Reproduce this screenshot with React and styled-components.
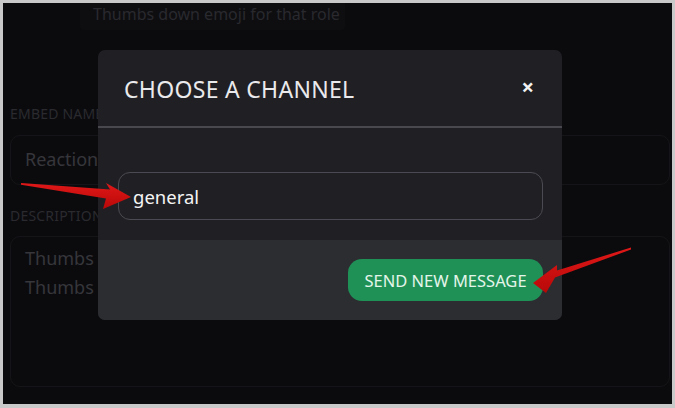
import React from "react";
import styled, { createGlobalStyle } from "styled-components";

const Global = createGlobalStyle`
  html, body { margin: 0; padding: 0; background: #c9c9c9; }
  body { font-family: "Noto Sans", "Open Sans", sans-serif; }
  * { box-sizing: border-box; }
`;

const Frame = styled.div`
  position: relative;
  margin: 3px 3px 4px 3px;
  height: 401px;
  background: #0b0b0e;
  overflow: hidden;
  display: flex;
  flex-direction: column;
  padding: 0 2px 0 7px;
`;

const Tip = styled.div`
  align-self: flex-start;
  margin-left: 70px;
  margin-top: -3px;
  width: 265px;
  height: 30px;
  background: #0e0e11;
  border-radius: 4px;
  color: #29292e;
  font-size: 16px;
  padding: 3px 0 0 13px;
  white-space: nowrap;
`;

const Label = styled.div`
  color: #2a2a2f;
  font-size: 14px;
  letter-spacing: 0.2px;
  text-transform: uppercase;
  margin-top: ${(p) => p.$mt}px;
  line-height: 18px;
`;

const Field = styled.div`
  margin-top: ${(p) => p.$mt}px;
  height: ${(p) => p.$h}px;
  border: 1px solid #151519;
  border-radius: 10px;
  color: #36363b;
  font-size: 18px;
  line-height: 29px;
  padding: ${(p) => p.$pad};
`;

const Modal = styled.div`
  position: absolute;
  left: 95px;
  top: 47px;
  width: 464px;
  height: 270px;
  border-radius: 7px;
  overflow: hidden;
  background: #202024;
  display: flex;
  flex-direction: column;
`;

const Header = styled.div`
  height: 78px;
  border-bottom: 2px solid #48484e;
  display: flex;
  align-items: flex-start;
  justify-content: space-between;
  padding: 24px 26px 0 26px;
`;

const Title = styled.h2`
  margin: 0;
  font-weight: 400;
  font-size: 23px;
  letter-spacing: 0.3px;
  color: #eaeaec;
  line-height: 31px;
`;

const Close = styled.span`
  color: #f2f2f2;
  font-size: 22px;
  font-weight: 700;
  line-height: 20px;
  margin-top: 2px;
  margin-right: 2px;
`;

const Body = styled.div`
  flex: 1;
  padding: 44px 19px 0 20px;
`;

const Input = styled.div`
  height: 48px;
  border: 1px solid #4a4a52;
  border-radius: 12px;
  display: flex;
  align-items: center;
  padding: 0 14px;
  color: #f4f4f4;
  font-size: 18.5px;
`;

const Footer = styled.div`
  height: 80px;
  background: #2c2d31;
  display: flex;
  align-items: center;
  justify-content: flex-end;
  padding: 0 19px 0 0;
`;

const Button = styled.button`
  width: 195px;
  height: 42px;
  border: none;
  border-radius: 14px;
  background: #1f9157;
  color: #e4f5ea;
  font-family: "Noto Sans", "Open Sans", sans-serif;
  font-size: 16.5px;
  padding: 0;
`;

const Arrows = styled.svg`
  position: absolute;
  left: 0;
  top: 0;
  width: 669px;
  height: 401px;
  pointer-events: none;
`;

export default function App() {
  return (
    <>
      <Global />
      <Frame>
        <Tip>Thumbs down emoji for that role</Tip>
        <Label $mt={75}>Embed Name</Label>
        <Field $mt={12} $h={50} $pad="9px 14px">Reaction Roles</Field>
        <Label $mt={22}>Description</Label>
        <Field $mt={11} $h={151} $pad="7px 14px">
          Thumbs up emoji for that role
          <br />
          Thumbs down emoji for that role
        </Field>
        <Modal>
          <Header>
            <Title>CHOOSE A CHANNEL</Title>
            <Close>×</Close>
          </Header>
          <Body>
            <Input>general</Input>
          </Body>
          <Footer>
            <Button>SEND NEW MESSAGE</Button>
          </Footer>
        </Modal>
        <Arrows viewBox="3 3 669 401">
          <defs>
            <linearGradient id="ag" x1="0" y1="0" x2="0" y2="1">
              <stop offset="0" stopColor="#e01818" />
              <stop offset="1" stopColor="#b80808" />
            </linearGradient>
          </defs>
          <polygon
            points="21,183 110,189.5 106,183 131,197 103,209 106,198.5 21,184.8"
            fill="url(#ag)"
          />
          <polygon
            points="631,247.5 557,270.5 557,265 533,283 546,293 555,277.5 631,249.5"
            fill="url(#ag)"
          />
        </Arrows>
      </Frame>
    </>
  );
}
